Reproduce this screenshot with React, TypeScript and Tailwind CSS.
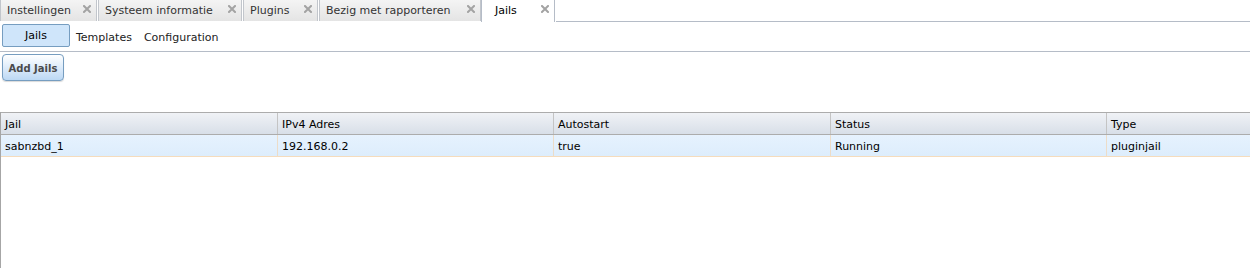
import React from "react";

const font = { fontFamily: '"DejaVu Sans", Verdana, sans-serif' };

function CloseX() {
  return (
    <svg width="8" height="8" viewBox="0 0 8 8" className="mt-[1px] self-start">
      <path d="M1 1 L7 7 M7 1 L1 7" stroke="#a3a3a3" strokeWidth="2" strokeLinecap="square" />
    </svg>
  );
}

function Tab({ label, w, active }: { label: string; w: string; active?: boolean }) {
  return (
    <div
      className={
        "flex shrink-0 items-start justify-between border-x pl-[6px] pr-[5px] pt-[4px] " +
        w +
        " " +
        (active
          ? "h-[22px] border-[#b5bcc7] bg-white text-[#000]"
          : "h-[21px] border-[#c2c6cc] bg-gradient-to-b from-[#f4f4f4] to-[#e4e4e4] text-[#333]")
      }
    >
      <span className={"leading-[14px] " + (active ? "pl-[7px]" : "")}>{label}</span>
      <CloseX />
    </div>
  );
}

const cols = [
  { h: "Jail", v: "sabnzbd_1", w: "w-[277px]" },
  { h: "IPv4 Adres", v: "192.168.0.2", w: "w-[276px]" },
  { h: "Autostart", v: "true", w: "w-[277px]" },
  { h: "Status", v: "Running", w: "w-[276px]" },
  { h: "Type", v: "pluginjail", w: "flex-1" },
];

export default function App() {
  return (
    <div className="h-[268px] w-[1250px] overflow-hidden bg-white text-[11px] text-black" style={font}>
      <div className="flex h-[22px] items-start gap-px">
        <Tab label="Instellingen" w="w-[97px]" />
        <Tab label="Systeem informatie" w="w-[144px]" />
        <Tab label="Plugins" w="w-[75px]" />
        <div className="-mr-px">
          <Tab label="Bezig met rapporteren" w="w-[162px]" />
        </div>
        <Tab label="Jails" w="w-[74px]" active />
        <div className="mt-[21px] h-px flex-1 bg-[#b5bcc7]" />
      </div>
      <div className="flex h-[30px] items-start gap-[6px] border-b border-[#b5bcc7] pl-[2px] pt-[2px]">
        <div className="flex h-[23px] w-[68px] items-center justify-center rounded-[2px] border border-[#769dc0] bg-[#cfe5fa] pt-[2px] text-black">
          Jails
        </div>
        <span className="pt-[6px] text-[#222]">Templates</span>
        <span className="pl-[6px] pt-[6px] text-[#222]">Configuration</span>
      </div>
      <div className="flex pl-[2px] pt-[2px]">
        <div className="flex h-[27px] w-[62px] items-center justify-center rounded-[4px] border border-[#769dc0] bg-gradient-to-b from-[#ffffff] to-[#bcd8f4] pt-[1px] text-[10px] font-bold text-[#4a4a4a] shadow-[0_1px_1px_rgba(0,0,0,0.15)]">
          Add Jails
        </div>
      </div>
      <div className="mt-[31px] h-[200px] border-l border-[#a6a6a6]">
        <div className="flex h-[23px] border-y border-[#acacac] bg-gradient-to-b from-[#f0f2f6] to-[#d8dfe8]">
          {cols.map((c, i) => (
            <div
              key={c.h}
              className={"flex items-center pl-[4px] pt-[3px] " + c.w + (i < 4 ? " border-r border-[#c4c4c4]" : "")}
            >
              {c.h}
            </div>
          ))}
        </div>
        <div className="flex h-[22px] border-b border-[#f5dcbd] bg-gradient-to-b from-[#e6f2fe] to-[#ddedfc]">
          {cols.map((c, i) => (
            <div
              key={c.h}
              className={"flex items-center pl-[4px] pt-[3px] " + c.w + (i < 4 ? " border-r border-[#ecdcc8]" : "")}
            >
              {c.v}
            </div>
          ))}
        </div>
      </div>
    </div>
  );
}
